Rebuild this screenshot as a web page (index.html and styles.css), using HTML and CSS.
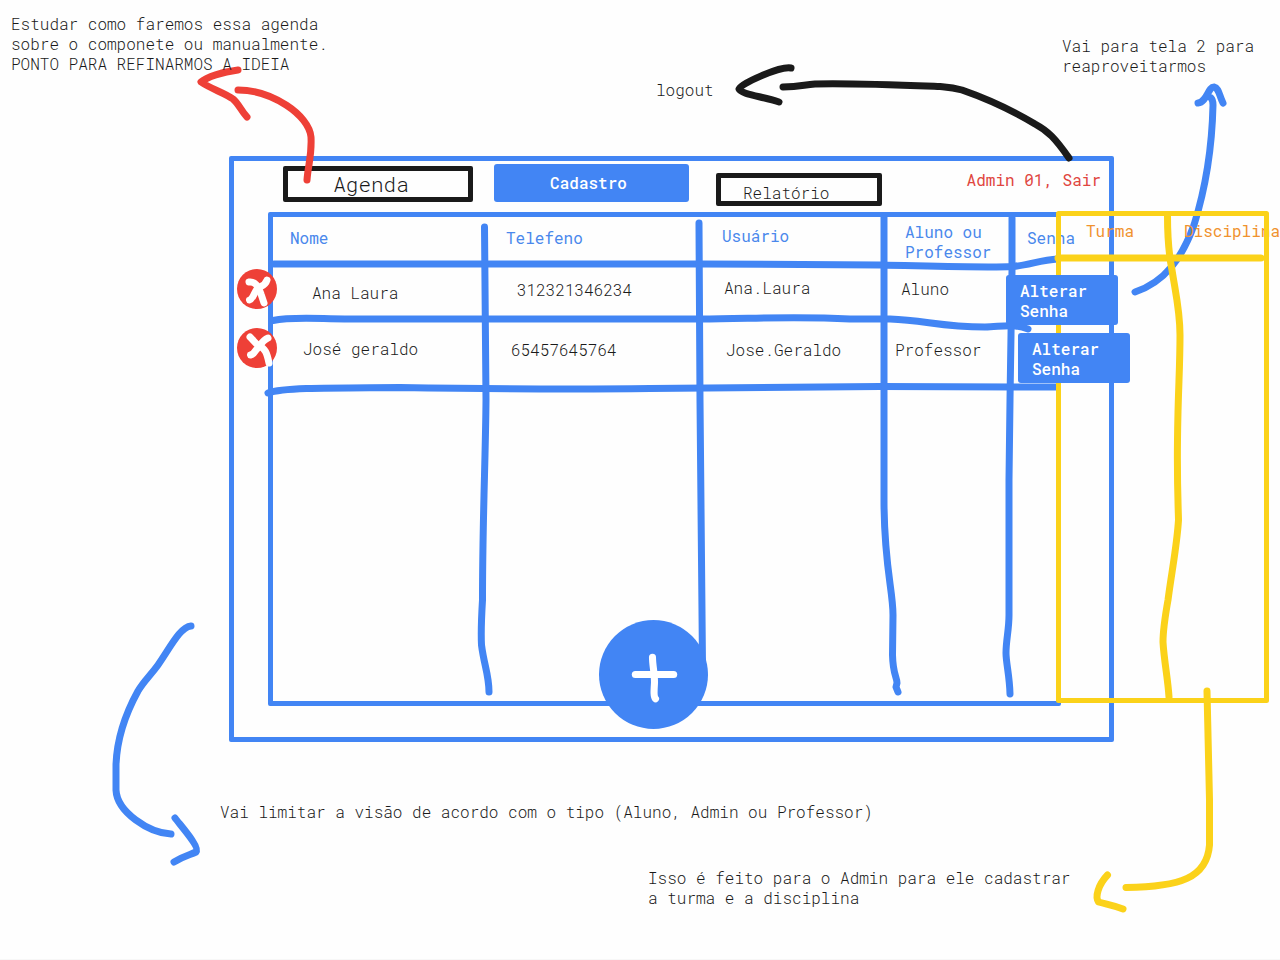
FILE: index.html
```html
<!DOCTYPE html>
<html lang="pt-BR">
<head>
<meta charset="utf-8">
<meta name="viewport" content="width=device-width, initial-scale=1">
<title>Cadastro</title>
<link rel="stylesheet" href="styles.css">
</head>
<body>
<main class="board">

  <!-- blue pen strokes: table rules and arrows -->
  <svg class="ink ink-blue" aria-hidden="true">
    <path d="M274 264H700L880 265C930 266 985 268 1013 266.500C1030 265 1040 260 1058 259"/>
    <path d="M273 320.500C292 316.500 320 319 345 319H700C750 319 790 316 850 319H890C925 320 940 327 985 327C1000 327 1012 323 1028 329"/>
    <path d="M268 393C285 387 340 388 400 387.500C500 389 560 389.500 650 388.500L880 386.500L1057 387"/>
    <path d="M484.500 227L486 400C485.500 460 482.500 520 482.500 600C481 625 481 635 481.500 645C484 665 489 675 489 692"/>
    <path d="M699 223L700 400L702.500 665"/>
    <path d="M884 217V500C884 565 893 590 893 615L892.500 655C893 675 897 677 897 683L896 687L898 692"/>
    <path d="M1012 218V270L1010 400L1009 480V615C1009 630 1006 640 1006 653C1006 663 1009.500 675 1010 694"/>
    <path d="M1135 292C1165 282 1182 258 1194 225C1205 190 1212 150 1213 105Q1213 100 1211 98"/>
    <path d="M1198 103C1207 102 1208 87 1214 87C1219 88 1219 95 1223 103"/>
    <path d="M191 626C180 627 170 648 158 665C150 676 144 681 138 691C127 711 117 735 116 765V790C117 812 149 833 171 834"/>
    <path d="M175 818C181 826 200 847 196 852C190 855 186 855 174 862"/>
  </svg>

  <section class="frame" aria-label="Cadastro">
    <header class="bar">
      <nav class="tabs">
        <button class="tab tab-agenda" type="button">Agenda</button>
        <button class="tab tab-cadastro" type="button">Cadastro</button>
        <button class="tab tab-relatorio" type="button">Relatório</button>
      </nav>
      <a class="session" href="#">Admin 01, Sair</a>
    </header>
    <div class="panel">
      <table class="users">
        <colgroup>
          <col class="c-nome"><col class="c-tel"><col class="c-user"><col class="c-tipo">
          <col class="c-senha"><col class="c-turma"><col class="c-disc">
        </colgroup>
        <thead>
          <tr>
            <th>Nome</th><th>Telefeno</th><th>Usuário</th><th class="two-line">Aluno ou Professor</th><th>Senha</th>
            <th class="extra">Turma</th><th class="extra">Disciplina</th>
          </tr>
        </thead>
        <tbody>
          <tr class="row-ana">
            <td>
              <button class="remove" type="button" aria-label="Remover Ana Laura">
                <svg viewBox="0 0 40 40" aria-hidden="true"><path d="M30 11C28 18 22 17 20 20C17 24 16 30 12.500 31"/><path d="M12 13C18 12 22 18 24 25L27 34"/></svg>
              </button>Ana Laura</td>
            <td>312321346234</td><td>Ana.Laura</td><td>Aluno</td>
            <td><button class="change" type="button">Alterar<br>Senha</button></td>
            <td></td><td></td>
          </tr>
          <tr class="row-jose">
            <td>
              <button class="remove" type="button" aria-label="Remover José geraldo">
                <svg viewBox="0 0 40 40" aria-hidden="true"><path d="M31 10C26 12 24 16 21 20C17 23 18 26 13.500 27"/><path d="M13 9C17 13 18 15 22 18C28 20 30 25 32 35"/></svg>
              </button>José geraldo</td>
            <td>65457645764</td><td>Jose.Geraldo</td><td>Professor</td>
            <td><button class="change" type="button">Alterar<br>Senha</button></td>
            <td></td><td></td>
          </tr>
        </tbody>
      </table>
      <button class="add" type="button" aria-label="Adicionar">
        <svg viewBox="0 0 108 108" aria-hidden="true"><path d="M36 54H74"/><path d="M53 37C53 45 55 52 55 62C54.500 70 54 76 56 78"/></svg>
      </button>
    </div>
  </section>

  <!-- yellow block with the extra columns, and its arrow -->
  <svg class="ink ink-yellow" aria-hidden="true">
    <rect class="box" x="1058.500" y="213.500" width="208" height="487"/>
    <path d="M1058 258H1261"/>
    <path d="M1167.500 216C1167.500 240 1169 255 1172 270C1175 290 1180 310 1180 335C1180 370 1178 390 1177.500 440C1177 480 1178 500 1178.500 520C1177 545 1172 570 1168 600C1165 617 1163 630 1163 642C1164 660 1168 680 1169 697"/>
    <path d="M1207 691L1209.500 800V845C1207 878 1180 887 1126 887.500"/>
    <path d="M1107.500 875C1098 885 1095 897 1098.500 902C1105 904 1112 905 1123 909"/>
  </svg>
  <svg class="ink ink-red" aria-hidden="true">
    <path d="M307 180C308 165 312 156 311 137C309 115 272 90 238 90"/>
    <path d="M238 70C222 72 207 77 201 82C211 89 225 93 233 99C239 104 241 111 247 117"/>
  </svg>
  <svg class="ink ink-black" aria-hidden="true">
    <path d="M1069 158C1055 138 1048 131 1035 124C1010 109 985 98 962 90C952 87 947 87 940 86.500C900 85 850 83 815 84C803 85 800 86.500 783 87"/>
    <path d="M791 68C780 66 740 84 739 89C741 94 760 96 779 102"/>
  </svg>

  <p class="note note-agenda">Estudar como faremos essa agenda<br>sobre o componete ou manualmente.<br>PONTO PARA REFINARMOS A IDEIA</p>
  <p class="note note-logout">logout</p>
  <p class="note note-tela">Vai para tela 2 para<br>reaproveitarmos</p>
  <p class="note note-visao">Vai limitar a visão de acordo com o tipo (Aluno, Admin ou Professor)</p>
  <p class="note note-turma">Isso é feito para o Admin para ele cadastrar<br>a turma e a disciplina</p>
</main>
</body>
</html>
```
FILE: styles.css
```css
:root {
  --blue: #4285f4;
  --yellow: #fbd21a;
  --red: #ee4037;
  --ink: #1a1a1a;
}

* { box-sizing: border-box; }

body { margin: 0; background: #fefefe; }

button { font: inherit; cursor: pointer; }

.board {
  position: relative;
  min-height: 100vh;
  overflow: hidden;
  border-bottom: 1px solid #f7f7f7;
  color: var(--ink);
  font: 350 16px/20px "Roboto Mono", "Liberation Mono", monospace;
}

/* pen strokes over the whole canvas */
.ink {
  position: absolute;
  inset: 0;
  width: 100%;
  height: 100%;
  fill: none;
  stroke-width: 7;
  stroke-linecap: round;
  stroke-linejoin: round;
  pointer-events: none;
}
.ink .box { stroke-width: 5; }
.ink-blue { stroke: var(--blue); }
.ink-yellow { stroke: var(--yellow); }
.ink-red { stroke: var(--red); }
.ink-black { stroke: var(--ink); }

/* application window */
.frame {
  position: absolute;
  left: 229px;
  top: 156px;
  width: 885px;
  padding-bottom: 31px;
  border: 5px solid var(--blue);
  border-radius: 2px;
}

.bar {
  display: flex;
  justify-content: space-between;
  height: 51px;
  padding: 3px 8px 0 49px;
}

.tabs { display: flex; align-items: flex-start; gap: 21px; }

.tab {
  padding: 0;
  border: 5px solid var(--ink);
  border-radius: 2px;
  background: none;
  color: var(--ink);
}
.tab-agenda {
  width: 190px;
  height: 36px;
  margin-top: 2px;
  padding-right: 14px;
  font-size: 21px;
}
.tab-cadastro {
  width: 195px;
  height: 38px;
  padding-right: 6px;
  border: 0;
  border-radius: 3px;
  background: var(--blue);
  color: #fff;
  font-weight: 500;
}
.tab-relatorio {
  width: 166px;
  height: 33px;
  margin: 9px 0 0 6px;
  padding: 5px 0 0 22px;
  text-align: left;
}

.session {
  padding-top: 6px;
  color: #e0463f;
  font-weight: 400;
  text-decoration: none;
}

.panel {
  position: relative;
  width: 793px;
  height: 494px;
  margin-left: 34px;
  border: 5px solid var(--blue);
  border-radius: 2px;
}

/* the last columns run past the panel and the window */
.users {
  width: 1007px;
  table-layout: fixed;
  border-collapse: collapse;
}
.c-nome { width: 213px; }
.c-tel { width: 215px; }
.c-user { width: 184px; }
.c-tipo { width: 127px; }
.c-senha { width: 46px; }
.c-turma { width: 110px; }
.c-disc { width: 112px; }

.users th,
.users td {
  padding: 0;
  vertical-align: top;
  text-align: left;
  font-weight: inherit;
  white-space: nowrap;
}
.users th {
  height: 47px;
  padding: 11px 0 0 17px;
  color: #4a88ec;
  font-weight: 400;
}
.users th:nth-child(2) { padding-left: 20px; }
.users th:nth-child(3) { padding: 9px 0 0 21px; }
.users th.two-line { padding: 5px 0 0 20px; white-space: normal; }
.users th:nth-child(5) { padding-left: 15px; }
.users th.extra { padding: 4px 0 0 28px; color: #f0922e; }
.users th:last-child { padding-left: 16px; }

.row-ana td { height: 61px; padding: 16px 0 0 31px; }
.row-jose td { height: 63px; padding: 15px 0 0 25px; }
.users td:first-child { position: relative; }
.row-ana td:first-child { padding: 19px 0 0 39px; }
.row-jose td:first-child { padding: 14px 0 0 30px; }
.row-ana td:nth-child(3) { padding: 14px 0 0 23px; }
.row-ana td:nth-child(4) { padding: 15px 0 0 16px; }
.row-jose td:nth-child(4) { padding-left: 10px; }
.row-ana td:nth-child(5) { padding: 11px 0 0; }
.row-jose td:nth-child(5) { padding: 8px 0 0 6px; }

.change {
  position: relative;
  z-index: 4;
  display: block;
  width: 112px;
  height: 50px;
  padding: 2px 0 0 14px;
  border: 0;
  border-radius: 3px;
  background: var(--blue);
  color: #fff;
  font-weight: 500;
  text-align: left;
}
.row-ana .change { margin-left: -6px; }

.remove {
  position: absolute;
  left: -36px;
  top: 5px;
  width: 40px;
  height: 40px;
  padding: 0;
  border: 0;
  border-radius: 50%;
  background: var(--red);
}
.row-jose .remove { top: 3px; }

.remove svg,
.add svg {
  display: block;
  width: 100%;
  height: 100%;
  overflow: visible;
  fill: none;
  stroke: #fff;
  stroke-width: 7;
  stroke-linecap: round;
  stroke-linejoin: round;
}

.add {
  position: absolute;
  left: 326px;
  bottom: -28px;
  width: 109px;
  height: 109px;
  padding: 0;
  border: 0;
  border-radius: 50%;
  background: var(--blue);
}

/* loose annotations on the canvas */
.note { position: absolute; margin: 0; white-space: nowrap; }
.note-agenda { left: 11px; top: 14px; }
.note-logout { left: 656px; top: 80px; }
.note-tela { left: 1062px; top: 36px; }
.note-visao { left: 220px; top: 802px; }
.note-turma { left: 648px; top: 868px; }
```
